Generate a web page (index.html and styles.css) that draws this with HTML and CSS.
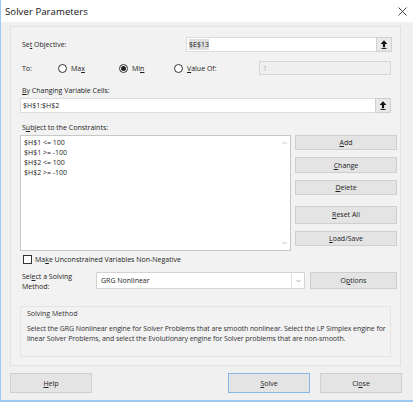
FILE: index.html
```html
<!DOCTYPE html>
<html>
<head>
<meta charset="utf-8">
<link rel="stylesheet" href="styles.css">
</head>
<body>
<div class="win">
  <div class="titlebar">
    <span class="title">Solver Parameters</span>
    <svg class="close" width="9" height="9" viewBox="0 0 9 9"><path d="M0.5 0.5L8.5 8.5M8.5 0.5L0.5 8.5" stroke="#333" stroke-width="0.9" fill="none"/></svg>
  </div>
  <div class="content">
    <div class="panel">
      <div class="row r-obj">
        <span class="lbl obj-lbl">Se<u>t</u> Objective:</span>
        <div class="refbox obj-box">
          <div class="field"><span class="sel">$E$13</span></div>
          <div class="refbtn"><svg width="8" height="9" viewBox="0 0 8 9"><path d="M4 0.3L7.4 4H5.1V7.2H2.9V4H0.6Z" fill="#111"/><rect x="1.5" y="8" width="5" height="0.9" fill="#111"/></svg></div>
        </div>
      </div>
      <div class="row r-to">
        <span class="lbl to-lbl">To:</span>
        <span class="radio r-max"><span class="dot"></span><span>Ma<u>x</u></span></span>
        <span class="radio r-min"><span class="dot on"></span><span>Mi<u>n</u></span></span>
        <span class="radio r-val"><span class="dot"></span><span><u>V</u>alue Of:</span></span>
        <div class="field dis">1</div>
      </div>
      <div class="lbl by-lbl"><u>B</u>y Changing Variable Cells:</div>
      <div class="refbox var-box">
        <div class="field">$H$1:$H$2</div>
        <div class="refbtn"><svg width="8" height="9" viewBox="0 0 8 9"><path d="M4 0.3L7.4 4H5.1V7.2H2.9V4H0.6Z" fill="#111"/><rect x="1.5" y="8" width="5" height="0.9" fill="#111"/></svg></div>
      </div>
      <div class="lbl sub-lbl">S<u>u</u>bject to the Constraints:</div>
      <div class="cons">
        <div class="list">
          <div class="items">
            <div>$H$1 &lt;= 100</div>
            <div>$H$1 &gt;= -100</div>
            <div>$H$2 &lt;= 100</div>
            <div>$H$2 &gt;= -100</div>
          </div>
          <div class="scroll">
            <svg width="5" height="4" viewBox="0 0 5 4"><path d="M0.5 3L2.5 1L4.5 3" stroke="#aaa" stroke-width="0.7" fill="none"/></svg>
            <svg width="5" height="4" viewBox="0 0 5 4"><path d="M0.5 1L2.5 3L4.5 1" stroke="#aaa" stroke-width="0.7" fill="none"/></svg>
          </div>
        </div>
        <div class="btncol">
          <div class="btn"><u>A</u>dd</div>
          <div class="btn"><u>C</u>hange</div>
          <div class="btn"><u>D</u>elete</div>
          <div class="btn gap"><u>R</u>eset All</div>
          <div class="btn"><u>L</u>oad/Save</div>
        </div>
      </div>
      <div class="chkrow"><span class="chk"></span><span>Ma<u>k</u>e Unconstrained Variables Non-Negative</span></div>
      <div class="method">
        <div class="lbl meth-lbl">Sel<u>e</u>ct a Solving<br>Method:</div>
        <div class="combo">
          <div class="ctext">GRG Nonlinear</div>
          <div class="carrow"><svg width="5" height="4" viewBox="0 0 5 4"><path d="M0.5 1L2.5 3L4.5 1" stroke="#888" stroke-width="0.7" fill="none"/></svg></div>
        </div>
        <div class="btn opt">O<u>p</u>tions</div>
      </div>
      <div class="group">
        <div class="ghead">Solving Method</div>
        <div class="gtext">Select the GRG Nonlinear engine for Solver Problems that are smooth nonlinear. Select the LP Simplex engine for linear Solver Problems, and select the Evolutionary engine for Solver problems that are non-smooth.</div>
      </div>
    </div>
    <div class="bottom">
      <div class="btn bb"><u>H</u>elp</div>
      <div class="spacer"></div>
      <div class="btn bb solve"><u>S</u>olve</div>
      <div class="btn bb">Cl<u>o</u>se</div>
    </div>
  </div>
</div>
</body>
</html>
```
FILE: styles.css
```css
* { box-sizing: border-box; }
html, body { margin: 0; padding: 0; }
body {
  width: 413px;
  height: 402px;
  background: #f0f0f0;
  font-family: "Open Sans", "Noto Sans", sans-serif;
  font-size: 7px;
  color: #1a1a1a;
  overflow: hidden;
}
u { text-decoration: underline; text-underline-offset: 1px; text-decoration-thickness: 0.6px; }
.win {
  width: 413px;
  height: 402px;
  border-left: 1px solid #9ccaf0;
  border-bottom: 2px solid #9ccaf0;
  display: flex;
  flex-direction: column;
}
.titlebar {
  height: 22px;
  background: #ffffff;
  display: flex;
  align-items: center;
  justify-content: space-between;
  padding: 0 6px 0 4px;
}
.title { font-size: 9.6px; color: #111; letter-spacing: 0.05px; }
.close { margin-top: 1px; }
.content {
  flex: 1;
  display: flex;
  flex-direction: column;
  padding: 4px 11px 0 9px;
}
.panel {
  height: 340px;
  width: 391px;
  background: #f2f2f2;
  border: 1px solid #e2e2e2;
  padding: 10px 0 0 9px;
  display: flex;
  flex-direction: column;
}
.row { display: flex; align-items: center; }
.lbl { color: #222; }
.r-obj { height: 15px; }
.obj-lbl { width: 166px; padding-left: 2px; }
.refbox { display: flex; height: 15px; }
.obj-box { width: 206px; }
.var-box { width: 371px; }
.field {
  flex: 1;
  background: #fff;
  border: 1px solid #dcdcdc;
  border-right: none;
  display: flex;
  align-items: center;
  padding-left: 2px;
  white-space: nowrap;
}
.sel { background: #dedede; padding: 1px 0; }
.refbtn {
  width: 16px;
  background: #e8e8e8;
  border: 1px solid #d0d0d0;
  display: flex;
  align-items: center;
  justify-content: center;
}
.r-to { height: 14px; margin-top: 9px; }
.to-lbl { width: 38px; padding-left: 2px; }
.radio { display: flex; align-items: center; gap: 4px; }
.r-max { width: 61px; }
.r-min { width: 55px; }
.r-val { width: 85px; }
.dot {
  width: 9px; height: 9px;
  border: 1px solid #333;
  border-radius: 50%;
  background: #fff;
  display: flex; align-items: center; justify-content: center;
}
.dot.on::after {
  content: "";
  width: 5px; height: 5px;
  border-radius: 50%;
  background: #222;
}
.field.dis {
  flex: none;
  width: 132px;
  height: 14px;
  background: #efefef;
  border: 1px solid #d6d6d6;
  color: #aaa;
  padding-left: 3px;
}
.by-lbl { margin-top: 10px; padding-left: 2px; height: 11px; line-height: 11px; }
.var-box { margin-top: 2px; }
.sub-lbl { margin-top: 9px; padding-left: 2px; height: 11px; line-height: 11px; }
.cons { display: flex; margin-top: 2px; height: 118px; }
.list {
  width: 271px;
  height: 116px;
  background: #fff;
  border: 1px solid #c8c8c8;
  display: flex;
}
.items { flex: 1; padding: 2px 0 0 3px; line-height: 10px; color: #222; }
.scroll {
  width: 12px;
  display: flex;
  flex-direction: column;
  justify-content: space-between;
  align-items: center;
  padding: 5px 0 5px;
}
.btncol {
  margin-left: 4px;
  width: 102px;
  display: flex;
  flex-direction: column;
}
.btn {
  background: #e4e4e4;
  border: 1px solid #cfcfcf;
  display: flex;
  align-items: center;
  justify-content: center;
  color: #222;
}
.btncol .btn { height: 17px; margin-bottom: 7px; }
.btncol .btn.gap { margin-top: 4px; height: 19px; }
.chkrow { display: flex; align-items: center; gap: 3px; height: 10px; margin-top: 1px; padding-left: 3px; }
.chk { width: 9px; height: 9px; border: 1px solid #333; background: #fff; }
.method { display: flex; align-items: center; margin-top: 8px; height: 17px; }
.meth-lbl { width: 76px; line-height: 10px; padding-left: 2px; margin-top: 3px; }
.combo {
  width: 209px;
  height: 17px;
  background: #fff;
  border: 1px solid #d4d4d4;
  display: flex;
}
.ctext { flex: 1; display: flex; align-items: center; padding-left: 4px; }
.carrow {
  width: 13px;
  border-left: 1px solid #e0e0e0;
  display: flex; align-items: center; justify-content: center;
}
.btn.opt { width: 87px; height: 17px; margin-left: 5px; }
.group {
  margin-top: 17px;
  width: 371px;
  height: 51px;
  border: 1px solid #e4e4e4;
  background: #f2f2f2;
  padding: 2px 4px 0 6px;
}
.ghead { color: #333; line-height: 10px; }
.gtext { margin-top: 5px; line-height: 10px; color: #333; letter-spacing: -0.08px; }
.bottom { display: flex; margin-top: 7px; height: 20px; }
.bb { width: 82px; height: 20px; }
.spacer { flex: 1; }
.solve { border-color: #86b7e6; margin-right: 10px; }
```
